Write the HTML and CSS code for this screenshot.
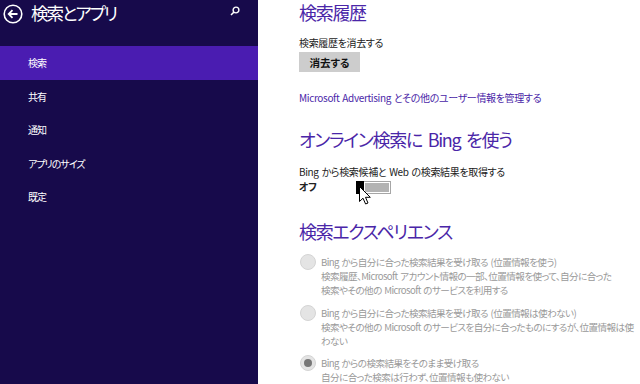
FILE: index.html
```html
<!DOCTYPE html>
<html lang="ja">
<head>
  <meta charset="UTF-8">
  <title>検索とアプリ</title>
  <link rel="stylesheet" href="styles.css">
</head>
<body>
  <div class="app">
    <nav class="side">
      <div class="side-head">
        <svg class="back" width="20" height="20" viewBox="0 0 20 20">
          <circle cx="10" cy="10" r="8.8" fill="none" stroke="#fff" stroke-width="1.6"/>
          <path d="M14.5 10H6M9.5 6.2L5.7 10l3.8 3.8" fill="none" stroke="#fff" stroke-width="1.8"/>
        </svg>
        <span class="side-title">検索とアプリ</span>
        <svg class="search" width="10" height="10" viewBox="0 0 10 10">
          <circle cx="6" cy="4" r="2.9" fill="none" stroke="#fff" stroke-width="1.4"/>
          <path d="M4 6L1 9" stroke="#fff" stroke-width="1.6"/>
        </svg>
      </div>
      <ul class="menu">
        <li class="active">検索</li>
        <li>共有</li>
        <li>通知</li>
        <li>アプリのサイズ</li>
        <li>既定</li>
      </ul>
    </nav>

    <main class="content">
      <h2>検索履歴</h2>
      <p class="label">検索履歴を消去する</p>
      <button class="btn">消去する</button>
      <a class="link">Microsoft Advertising とその他のユーザー情報を管理する</a>

      <h2 class="h-bing">オンライン検索に Bing を使う</h2>
      <p class="label">Bing から検索候補と Web の検索結果を取得する</p>
      <div class="toggle-row">
        <span class="state">オフ</span>
        <span class="toggle">
          <span class="thumb"></span>
          <span class="track"></span>
          <svg class="cursor" width="12" height="19" viewBox="0 0 12 19">
            <path d="M0.5 0.5V15.5L4 12.2L6.6 18L9 17L6.5 11.3H11.3Z" fill="#fff" stroke="#000" stroke-width="1"/>
          </svg>
        </span>
      </div>

      <h2 class="h-exp">検索エクスペリエンス</h2>
      <div class="radio">
        <span class="dot"></span>
        <div class="radio-text">
          <p>Bing から自分に合った検索結果を受け取る (位置情報を使う)</p>
          <p>検索履歴、Microsoft アカウント情報の一部、位置情報を使って、自分に合った<br>検索やその他の Microsoft のサービスを利用する</p>
        </div>
      </div>
      <div class="radio">
        <span class="dot"></span>
        <div class="radio-text">
          <p>Bing から自分に合った検索結果を受け取る (位置情報は使わない)</p>
          <p>検索やその他の Microsoft のサービスを自分に合ったものにするが、位置情報は使<br>わない</p>
        </div>
      </div>
      <div class="radio">
        <span class="dot on"></span>
        <div class="radio-text">
          <p>Bing からの検索結果をそのまま受け取る</p>
          <p>自分に合った検索は行わず、位置情報も使わない</p>
        </div>
      </div>
    </main>
  </div>
</body>
</html>
```

FILE: styles.css
```css
* {
  box-sizing: border-box;
}
body {
  margin: 0;
  font-family: "Noto Sans CJK JP", "Noto Sans", sans-serif;
  font-feature-settings: "palt";
  background: #fff;
  overflow: hidden;
}
p {
  margin: 0;
}
.app {
  display: flex;
  height: 384px;
}
.side {
  width: 258px;
  flex: none;
  background: #170a4b;
  color: #fff;
}
.side-head {
  display: flex;
  align-items: center;
  height: 26px;
  padding: 0 18px 0 3px;
}
.back {
  margin-top: 2px;
}
.side-title {
  margin-left: 8px;
  font-size: 17.5px;
  line-height: 26px;
  letter-spacing: -2px;
  flex: 1;
}
.search {
  margin-top: -4px;
}
.menu {
  list-style: none;
  margin: 20px 0 0;
  padding: 0;
}
.menu li {
  height: 33.5px;
  line-height: 33px;
  padding-left: 28px;
  font-size: 10px;
  letter-spacing: -1px;
}
.menu li.active {
  background: #4a1cb1;
}
.content {
  flex: 1;
  padding-left: 41px;
  color: #222;
  font-size: 10px;
  letter-spacing: -0.35px;
  word-spacing: 1px;
}
h2 {
  margin: 0;
  font-weight: normal;
  font-size: 18px;
  line-height: 24px;
  letter-spacing: -1.3px;
  word-spacing: 3px;
  color: #4a26a8;
}
.label {
  margin-top: 12px;
  line-height: 14px;
}
.btn {
  display: block;
  margin-top: 2px;
  width: 61px;
  height: 20px;
  border: none;
  background: #cdcdcd;
  font-family: inherit;
  font-feature-settings: "palt";
  font-size: 10.5px;
  font-weight: bold;
  color: #111;
  padding: 0;
}
.link {
  display: block;
  margin-top: 19px;
  color: #4a26a8;
  line-height: 14px;
}
.h-bing {
  margin-top: 22px;
}
.h-bing + .label {
  margin-top: 14px;
}
.toggle-row {
  display: flex;
  align-items: center;
  height: 14px;
}
.state {
  width: 57px;
  font-weight: bold;
}
.toggle {
  position: relative;
  display: flex;
  height: 13px;
  margin-top: 2px;
}
.thumb {
  width: 8px;
  background: #000;
}
.track {
  width: 27px;
  border: 1px solid #a6a6a6;
  border-left: none;
  box-shadow: inset 0 0 0 1px #fff;
  background: #b3b3b3;
}
.cursor {
  position: absolute;
  left: 3px;
  top: 5px;
}
.h-exp {
  margin-top: 26px;
}
.radio {
  display: flex;
  color: #999;
  font-size: 9.6px;
  line-height: 14px;
  margin-top: 12px;
  letter-spacing: -0.6px;
  white-space: nowrap;
}
.radio + .radio {
  margin-top: 9px;
}
.radio:last-child {
  margin-top: 8px;
}
.dot {
  flex: none;
  width: 16px;
  height: 16px;
  border-radius: 50%;
  background: #e4e4e4;
  border: 1px solid #d4d4d4;
  margin-top: -1px;
  margin-left: 1px;
  margin-right: 5px;
  position: relative;
}
.dot.on::after {
  content: "";
  position: absolute;
  left: 3px;
  top: 3px;
  width: 8px;
  height: 8px;
  border-radius: 50%;
  background: #777;
}
```
